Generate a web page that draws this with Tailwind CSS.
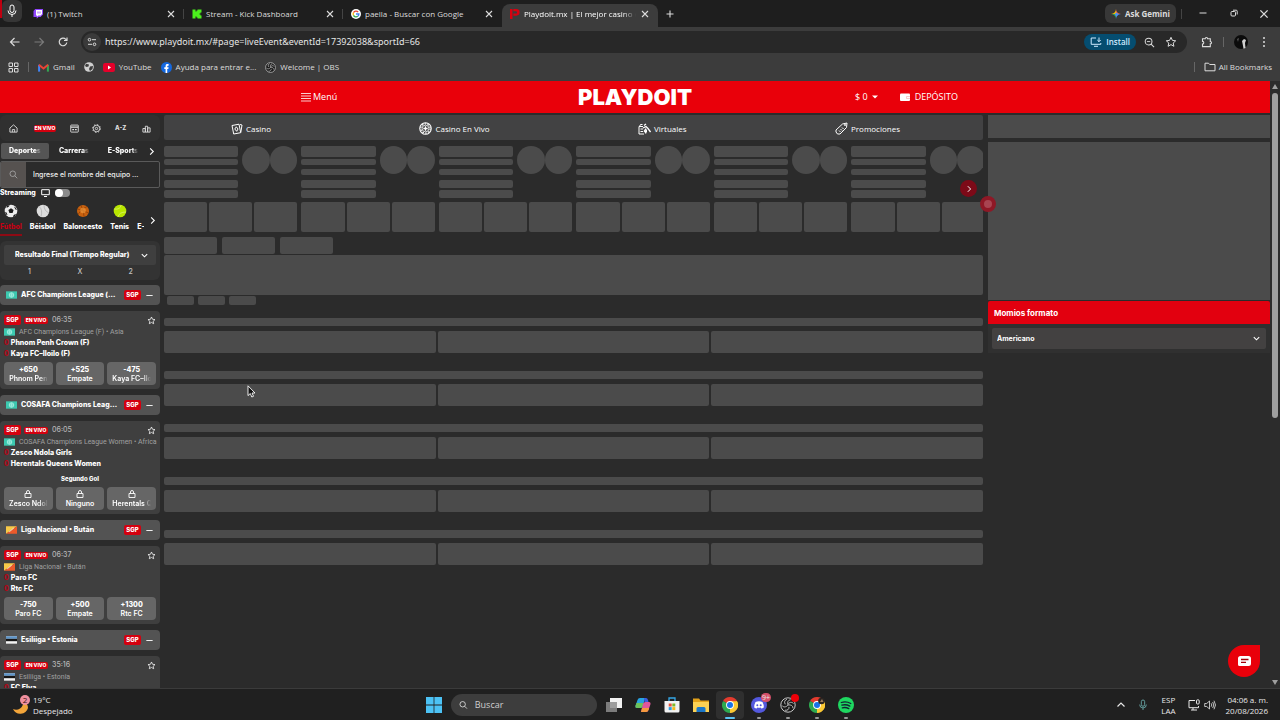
<!DOCTYPE html>
<html lang="es">
<head>
  <title>Playdoit.mx | El mejor casino de México</title>
  <meta charset="utf-8" />
  <meta name="viewport" content="width=device-width, initial-scale=1" />
  <script src="https://cdn.jsdelivr.net/npm/@tailwindcss/browser@4"></script>
</head>
<body class="h-screen overflow-hidden flex flex-col bg-[#2b2b2b] text-white font-['Open_Sans','Noto_Sans',sans-serif] text-[8px] leading-3">

<!-- shared icons -->
<svg class="hidden">
  <symbol id="close" viewBox="0 0 10 10"><path d="M2 2l6 6M8 2l-6 6" fill="none" stroke="currentColor" stroke-width="1.1" /></symbol>
  <symbol id="right" viewBox="0 0 10 10"><path d="M3.5 1.500L7 5 3.500 8.500" fill="none" stroke="currentColor" stroke-width="1.200" /></symbol>
  <symbol id="down" viewBox="0 0 10 10"><path d="M2 3.500l3 3 3-3" fill="none" stroke="currentColor" stroke-width="1.200" /></symbol>
  <symbol id="star" viewBox="0 0 12 12"><path d="M6 1.300l1.400 3.100 3.300.4-2.500 2.200.7 3.300L6 8.600l-2.900 1.700.7-3.300L1.300 4.800l3.300-.4z" fill="none" stroke="currentColor" stroke-linejoin="round" /></symbol>
  <symbol id="lens" viewBox="0 0 12 12"><circle cx="5" cy="5" r="3.700" fill="none" stroke="currentColor" stroke-width="1.100" /><path d="M7.700 7.700l3.300 3.300" stroke="currentColor" stroke-width="1.100" /></symbol>
  <symbol id="lock" viewBox="0 0 10 10"><path d="M2 4.500h6v4H2zM3.500 4.500V3a1.500 1.500 0 0 1 3 0v1.500" fill="none" stroke="currentColor" stroke-width=".9" stroke-linejoin="round" /></symbol>
  <symbol id="chrome" viewBox="0 0 16 16">
    <path d="M8 8L1.070 4A8 8 0 0 1 14.930 4z" fill="#e33b2e" />
    <path d="M8 8l6.930-4A8 8 0 0 1 8 16z" fill="#fcc934" />
    <path d="M8 8v8A8 8 0 0 1 1.070 4z" fill="#2da94f" />
    <path d="M8 4.200h7a8 8 0 0 1-.2 8L8 16l3.300-6z" fill="#fcc934" />
    <circle cx="8" cy="8" r="3.900" fill="#fff" /><circle cx="8" cy="8" r="3" fill="#1a73e8" />
  </symbol>
  <symbol id="obs" viewBox="0 0 16 16">
    <circle cx="8" cy="8" r="7.200" fill="#1a1a1a" stroke="#c9c9c9" stroke-width="1" />
    <path d="M8 8c-1-3 .3-5 2.600-5.300M8 8c3-.6 4.900.8 5 3.200M8 8c-2 2.500-4.500 2.400-6 .6M7 2.300C4.500 3 4 5.500 5.300 7.300M13.500 6.500c-1.900-1.900-4.200-1.400-5.200.600M5 13.200c2.600.6 4.300-1.200 4-3.300" fill="none" stroke="#c9c9c9" stroke-width=".9" />
  </symbol>
  <symbol id="mic" viewBox="0 0 12 14"><rect x="4" y="1" width="4" height="7.500" rx="2" fill="none" stroke="currentColor" /><path d="M2 6.500a4 4 0 0 0 8 0M6 10.500V13" fill="none" stroke="currentColor" /></symbol>
  <symbol id="world" viewBox="0 0 12 8"><rect width="12" height="8" fill="#3cc9b0" /><circle cx="6" cy="4" r="2.500" fill="#5fd8c4" stroke="#d9fff6" stroke-width=".6" /><path d="M6 1.500v5M3.500 4h5" stroke="#d9fff6" stroke-width=".4" /></symbol>
  <symbol id="bhutan" viewBox="0 0 12 8"><path d="M0 0h12L0 8z" fill="#f7c948" /><path d="M12 0v8H0z" fill="#ec5a2b" /><path d="M3.500 6l5-4" stroke="#fff" stroke-width=".8" /></symbol>
  <symbol id="estonia" viewBox="0 0 12 8"><rect width="12" height="8" fill="#f2f2f2" /><path d="M0 0h12v2.700H0z" fill="#5b93c9" /><path d="M0 2.700h12v2.600H0z" fill="#151515" /></symbol>
</svg>

<!-- browser tabs -->
<header class="shrink-0 bg-[#3c3c3c] text-[#dcdcdc]">
  <div class="h-[27px] flex items-center bg-[#1e1e1e]">
    <div class="w-[25px] self-stretch flex">
      <span class="w-[2px] h-[18px] bg-[#c00010]"></span>
      <button aria-label="Micrófono" class="w-[20px] h-[22px] rounded-md bg-[#363636] flex items-center justify-center text-white"><svg class="w-3 h-4"><use href="#mic" /></svg></button>
    </div>
    <nav class="flex self-stretch">
      <div class="w-[159px] flex items-center gap-1 px-2">
        <svg class="size-[10px] shrink-0" viewBox="0 0 10 10"><path d="M2.200 0H10v5.500L7.500 8H5.500L3.700 9.800V8H.5V2z" fill="#9146ff" /><path d="M3 1h6v4L7.500 6.500H5.300L4 7.700V6.500H3z" fill="#fff" /><path d="M5 2.500v2M7 2.500v2" stroke="#9146ff" stroke-width=".9" /></svg>
        <a href="#twitch" class="flex-1 whitespace-nowrap">(1) Twitch</a>
        <button aria-label="Cerrar"><svg class="size-[10px]"><use href="#close" /></svg></button>
      </div>
      <span class="-ml-px w-px h-[10px] self-center bg-[#444]"></span>
      <div class="w-[159px] flex items-center gap-1 px-2">
        <svg class="size-[10px] shrink-0" viewBox="0 0 10 10"><path d="M.5.5h3v2h1v-1h1v-1h4v3h-1v1h-1v1h1v1h1v3h-4v-1h-1v-1h-1v2h-3z" fill="#4bf01c" /></svg>
        <a href="#kick" class="flex-1 whitespace-nowrap">Stream - Kick Dashboard</a>
        <button aria-label="Cerrar"><svg class="size-[10px]"><use href="#close" /></svg></button>
      </div>
      <span class="-ml-px w-px h-[10px] self-center bg-[#444]"></span>
      <div class="w-[159px] flex items-center gap-1 px-2">
        <svg class="size-[10px] shrink-0" viewBox="0 0 12 12"><circle cx="6" cy="6" r="6" fill="#fff" /><g fill="none" stroke-width="1.600"><path d="M8.600 3.700A3.500 3.500 0 0 0 3 4.300" stroke="#ea4335" /><path d="M3 4.300a3.500 3.500 0 0 0 0 3.400" stroke="#fbbc05" /><path d="M3 7.700a3.500 3.500 0 0 0 5.200 1" stroke="#34a853" /><path d="M8.200 8.700A3.500 3.500 0 0 0 9.500 6H6" stroke="#4285f4" /></g></svg>
        <a href="#google" class="flex-1 whitespace-nowrap">paella - Buscar con Google</a>
        <button aria-label="Cerrar"><svg class="size-[10px]"><use href="#close" /></svg></button>
      </div>
      <div class="w-[156px] mt-1 pb-1 flex items-center gap-1 px-2 rounded-t-lg bg-[#3c3c3c]">
        <svg class="size-[10px] shrink-0" viewBox="0 0 12 12"><path d="M0 0h3v12H0zM4 0h3.500a4 4 0 0 1 0 8H4V5.500h3a1.400 1.400 0 0 0 0-2.800H4z" fill="#d8000f" /></svg>
        <a href="#playdoit" class="w-28 whitespace-nowrap text-white [mask-image:linear-gradient(to_right,black_88%,transparent)]">Playdoit.mx | El mejor casino de</a>
        <button aria-label="Cerrar"><svg class="size-[10px]"><use href="#close" /></svg></button>
      </div>
    </nav>
    <button aria-label="Nueva pestaña" class="ml-[6px]"><svg class="size-3" viewBox="0 0 12 12"><path d="M6 2.500v7M2.500 6h7" stroke="currentColor" stroke-width="1.100" /></svg></button>
    <div class="ml-auto flex items-center gap-[5px]">
      <button class="h-[19px] px-[6px] rounded-md bg-[#383838] flex items-center gap-1 font-bold"><svg class="size-[10px]" viewBox="0 0 10 10"><path d="M5 0Q4.700 4.700 0 5h5z" fill="#fbbc05" /><path d="M5 0q.3 4.700 5 5H5z" fill="#ea6a5a" /><path d="M0 5q4.700.3 5 5V5z" fill="#2faa5c" /><path d="M5 10q.3-4.700 5-5H5z" fill="#4b8df5" /><circle cx="5.500" cy="5.300" r="1.500" fill="#4b8df5" /></svg>Ask Gemini</button>
      <span class="w-px h-[10px] bg-[#444]"></span>
      <div class="flex pr-[2px]">
        <button aria-label="Minimizar" class="w-[31px] flex justify-center"><svg class="size-[10px]" viewBox="0 0 10 10"><path d="M1.500 5h7" stroke="currentColor" /></svg></button>
        <button aria-label="Restaurar" class="w-[31px] flex justify-center"><svg class="size-[10px]" viewBox="0 0 10 10"><rect x="2" y="3.500" width="4.500" height="4.500" rx="1" fill="none" stroke="currentColor" /><path d="M4 2.200h3.200a1 1 0 0 1 1 1V6.500" fill="none" stroke="currentColor" /></svg></button>
        <button aria-label="Cerrar ventana" class="w-[29px] flex justify-center"><svg class="size-3"><use href="#close" /></svg></button>
      </div>
    </div>
  </div>

  <!-- address bar -->
  <div class="h-[30px] flex items-center">
    <div class="w-[81px] pl-[9px] flex gap-3">
      <button aria-label="Atrás"><svg class="size-3" viewBox="0 0 12 12"><path d="M10.500 6h-9M5.500 2l-4 4 4 4" fill="none" stroke="currentColor" stroke-width="1.200" /></svg></button>
      <button aria-label="Adelante" class="text-[#7a7a7a]"><svg class="size-3" viewBox="0 0 12 12"><path d="M1.500 6h9M6.500 2l4 4-4 4" fill="none" stroke="currentColor" stroke-width="1.200" /></svg></button>
      <button aria-label="Recargar"><svg class="size-3" viewBox="0 0 12 12"><path d="M9.800 6.500A3.800 3.800 0 1 1 8.800 3.300L10 4.500M10 1.500v3H7" fill="none" stroke="currentColor" stroke-width="1.200" /></svg></button>
    </div>
    <div class="flex-1 h-[22px] rounded-full bg-[#282828] flex items-center pl-[2px] pr-[10px] gap-1">
      <button aria-label="Información del sitio" class="size-[18px] rounded-full bg-[#3a3a3a] flex items-center justify-center"><svg class="size-[10px]" viewBox="0 0 10 10" fill="none" stroke="currentColor"><circle cx="2.500" cy="2.700" r="1.300" /><path d="M5 2.700h4M1 7.300h4" /><circle cx="7.500" cy="7.300" r="1.300" /></svg></button>
      <input aria-label="Dirección" class="flex-1 bg-transparent outline-none font-['Noto_Sans',sans-serif] text-[9px] text-[#e6e6e6]" value="https://www.playdoit.mx/#page=liveEvent&amp;eventId=17392038&amp;sportId=66" />
      <button class="h-4 px-[6px] rounded-full bg-[#054d70] text-[#cfeaff] flex items-center gap-1 font-semibold"><svg class="w-3 h-[10px]" viewBox="0 0 12 10" fill="none" stroke="currentColor"><path d="M6 1H1.200v6.300h9.600V6M4 9.300h4M9 .5v4M7.300 3L9 4.700 10.700 3" /></svg>Install</button>
      <button aria-label="Zoom" class="ml-1 mr-[6px]"><svg class="size-[11px]" viewBox="0 0 12 12"><use href="#lens" /><path d="M3.200 5h3.600" stroke="currentColor" /></svg></button>
      <button aria-label="Favorito"><svg class="size-3"><use href="#star" /></svg></button>
    </div>
    <div class="flex items-center gap-[10px] pl-[14px] pr-[10px]">
      <button aria-label="Extensiones"><svg class="size-3" viewBox="0 0 12 12"><path d="M1.500 2.700h2.700a1.200 1.200 0 0 1 2.400 0h2.700v2.800a1.200 1.200 0 0 1 0 2.400v2.700H1.500V8a1.300 1.300 0 0 0 0-2.600z" fill="none" stroke="currentColor" stroke-width="1.100" /></svg></button>
      <span class="w-px h-[10px] bg-[#666]"></span>
      <button aria-label="Perfil"><svg class="size-[14px]" viewBox="0 0 14 14"><circle cx="7" cy="7" r="7" fill="#0b0b0b" /><path d="M8 6l2-2 2 1-1 3 .5 5-2 .8-.7-4z" fill="#cfcfcf" /><path d="M3 4l2-1-1 4z" fill="#555" /></svg></button>
      <button aria-label="Menú del navegador"><svg class="size-3" viewBox="0 0 12 12" fill="currentColor"><circle cx="6" cy="2" r="1" /><circle cx="6" cy="6" r="1" /><circle cx="6" cy="10" r="1" /></svg></button>
    </div>
  </div>

  <!-- bookmarks -->
  <nav class="h-6 pb-1 px-2 flex items-center gap-[9px]">
    <button aria-label="Aplicaciones"><svg class="size-[11px]" viewBox="0 0 11 11" fill="none" stroke="currentColor"><path d="M1 1h3.500v3.500H1zM6.500 1H10v3.500H6.500zM1 6.500h3.500V10H1zM6.500 6.500H10V10H6.500z" /></svg></button>
    <span class="w-px h-[10px] bg-[#666]"></span>
    <a href="#gmail" class="flex items-center gap-1"><svg class="w-[11px] h-[9px]" viewBox="0 0 12 9"><path d="M1.200 9V1.500" stroke="#4285f4" stroke-width="2.200" /><path d="M10.800 9V1.500" stroke="#34a853" stroke-width="2.200" /><path d="M1 1.500l5 4 5-4" fill="none" stroke="#ea4335" stroke-width="2.200" /></svg>Gmail</a>
    <a href="#web" aria-label="Web"><svg class="size-[10px]" viewBox="0 0 10 10"><circle cx="5" cy="5" r="4.800" fill="#d0d0d0" /><path d="M2 1.800l3 .7-.5 2-2 .5L1 4zM6 4.500l3-.5-.5 3L6 9l-1-2z" fill="#3c3c3c" /></svg></a>
    <a href="#youtube" class="flex items-center gap-1"><svg class="w-3 h-[9px]" viewBox="0 0 12 9"><rect width="12" height="9" rx="2.200" fill="#e6002a" /><path d="M5 2.500v4l3-2z" fill="#fff" /></svg>YouTube</a>
    <a href="#facebook" class="flex items-center gap-1"><svg class="size-[11px]" viewBox="0 0 12 12"><circle cx="6" cy="6" r="6" fill="#1468e0" /><path d="M5 12V7.500H3.600V5.700H5V4.500C5 3 5.900 2.300 7.100 2.300h1.200V4h-.7c-.6 0-.8.3-.8.800v.9h1.500l-.3 1.800H6.800V12z" fill="#fff" /></svg>Ayuda para entrar e...</a>
    <a href="#obs-welcome" class="flex items-center gap-1"><svg class="size-[11px]"><use href="#obs" /></svg>Welcome | OBS</a>
    <span class="w-px h-[10px] bg-[#666] ml-auto"></span>
    <button class="flex items-center gap-[3px]"><svg class="w-3 h-[10px]" viewBox="0 0 12 10"><path d="M1 1.200h3.500l1.200 1.300H11v6.300H1z" fill="none" stroke="currentColor" /></svg>All Bookmarks</button>
  </nav>
</header>

<!-- page -->
<div class="flex-1 min-h-0 flex">
  <div class="flex-1 min-w-0 flex flex-col">
    <div class="h-8 shrink-0 bg-[#e9000a]">
      <div class="h-full max-w-[668px] mx-auto grid grid-cols-[1fr_auto_1fr] items-center">
        <button class="justify-self-start flex items-center gap-[2px] text-[9px]"><svg class="size-[10px]" viewBox="0 0 10 10"><path d="M0 1.500h10M0 4h10M0 6.500h10M0 9h10" stroke="currentColor" stroke-width=".8" /></svg>Menú</button>
        <a href="#inicio" class="font-['Inter',sans-serif] font-black text-[22px] leading-6">PLAYDOIT</a>
        <div class="justify-self-end flex items-center gap-[22px] pr-[11px] text-[9px]">
          <button class="flex items-center gap-1">$ 0 <svg class="w-[6px] h-1" viewBox="0 0 6 4"><path d="M0 .5h6l-3 3z" fill="currentColor" /></svg></button>
          <a href="#deposito" class="flex items-center gap-[5px]"><svg class="w-[10px] h-2" viewBox="0 0 10 8"><rect y=".5" width="10" height="7.500" rx="1" fill="#fff" /><path d="M6.500 3.500H10M6.500 3.500v2H10" stroke="#f5a5a8" stroke-width=".6" fill="none" /></svg>DEPÓSITO</a>
        </div>
      </div>
    </div>

    <div class="relative flex-1 min-h-0 overflow-hidden flex gap-1 pt-[2px]">
      <!-- sidebar -->
      <aside class="w-40 shrink-0 overflow-hidden font-['Inter',sans-serif] font-extrabold text-[7px] leading-[10px]">
        <nav class="h-[26px] px-[6px] flex items-center justify-between rounded-md bg-[#303030] text-[#dedede]">
          <a href="#home" aria-label="Inicio" class="w-[14px] flex justify-center"><svg class="size-[9px]" viewBox="0 0 10 10" fill="none" stroke="currentColor"><path d="M1 4.500L5 1l4 3.500V9H1zM3.700 9V6.200h2.600V9" /></svg></a>
          <a href="#envivo" class="px-px rounded-xs bg-[#d4000f] text-white text-[5px] leading-[7px]">EN VIVO</a>
          <a href="#calendario" aria-label="Calendario"><svg class="size-[9px]" viewBox="0 0 10 10" fill="none" stroke="currentColor"><rect x=".8" y="1.200" width="8.400" height="7.800" rx=".5" /><path d="M1 3.500h8M2.500 6.200h2M5.500 6.200h2" stroke-width="1.300" /></svg></a>
          <a href="#ajustes" aria-label="Ajustes"><svg class="size-[9px]" viewBox="0 0 10 10" fill="none" stroke="currentColor"><circle cx="5" cy="5" r="3.600" /><circle cx="5" cy="5" r="1.300" /><circle cx="5" cy="5" r="4.400" stroke-dasharray="1.500 1.950" /></svg></a>
          <a href="#az" class="text-[6px]">A-Z</a>
          <a href="#podio" aria-label="Resultados" class="w-[14px] flex justify-center"><svg class="size-[9px]" viewBox="0 0 10 10" fill="none" stroke="currentColor"><path d="M1 9V5h2.700v4zM3.700 9V2.500h2.600V9zM6.300 9V4.300H9V9z" /></svg></a>
        </nav>
        <div class="mt-[2px] h-4 flex items-center pl-px pr-1">
          <button class="w-12 h-4 rounded-xs bg-[#555]"><span class="[mask-image:linear-gradient(to_right,black_80%,transparent)]">Deportes</span></button>
          <button class="w-[50px] h-4"><span class="[mask-image:linear-gradient(to_right,black_80%,transparent)]">Carreras</span></button>
          <button class="w-12 h-4 whitespace-nowrap"><span class="[mask-image:linear-gradient(to_right,black_80%,transparent)]">E-Sports</span></button>
          <button aria-label="Más categorías" class="ml-auto"><svg class="size-[9px]"><use href="#right" /></svg></button>
        </div>
        <label class="mt-[2px] h-[27px] flex items-center rounded-xs border border-[#5a5a5a] overflow-hidden">
          <span class="w-[25px] self-stretch bg-[#565250] flex items-center justify-center text-[#aaa]"><svg class="size-[9px]"><use href="#lens" /></svg></span>
          <input type="text" aria-label="Buscar equipo" placeholder="Ingrese el nombre del equipo …" class="flex-1 min-w-0 pl-[7px] bg-transparent outline-none font-medium placeholder:text-[#f0f0f0]" />
        </label>
        <label class="h-[10px] flex items-center gap-[5px]">Streaming
          <svg class="w-[9px] h-2" viewBox="0 0 9 8" fill="none" stroke="currentColor"><path d="M.7.700h7.600v5H.7zM3 7.500h3" /></svg>
          <input type="checkbox" class="peer sr-only" />
          <span class="w-[15px] h-2 rounded-full bg-[#8a8a8a] flex items-center"><span class="size-2 rounded-full bg-white"></span></span>
        </label>
        <div class="mt-[6px] h-8 flex items-center">
          <nav class="flex-1 self-stretch overflow-hidden flex gap-2 whitespace-nowrap">
            <a href="#futbol" class="flex flex-col items-center gap-1 text-[#c40012] border-b-2 border-[#8e0a14]"><svg class="size-[14px] shrink-0" viewBox="0 0 14 14"><circle cx="7" cy="7" r="6.300" fill="#ededed" /><path d="M7 4.300L9.600 6l-1 3H5.400l-1-3zM3 2l2.500-1L5 2.500 2.500 4zM11.500 3.500L13 6l-1.500-.5L10 2.500zM1 8l1.500.5L3.500 11 2 10.500zM9 12l1.500-1.500 1.500-.5-1 2-2 1z" fill="#1b1b1b" /></svg>Fútbol</a>
            <a href="#beisbol" class="flex flex-col items-center gap-1"><svg class="size-[14px] shrink-0" viewBox="0 0 14 14"><circle cx="7" cy="7" r="6.300" fill="#dcdcdc" /><path d="M3 2.500q4 3 2 10M8 1q0 6 5 8" fill="none" stroke="#a9a9a9" stroke-width=".7" /></svg>Béisbol</a>
            <a href="#baloncesto" class="flex flex-col items-center gap-1"><svg class="size-[14px] shrink-0" viewBox="0 0 14 14"><circle cx="7" cy="7" r="6" fill="#c8610f" /><path d="M1.500 5q5 1 11 4M5 1.500q3 5 3 11M11 2.500q-6 2-9 8" fill="none" stroke="#7a3204" stroke-width=".6" /><circle cx="7" cy="6.500" r="2.800" fill="#f0993c" opacity=".7" /></svg>Baloncesto</a>
            <a href="#tenis" class="flex flex-col items-center gap-1"><svg class="size-[14px] shrink-0" viewBox="0 0 14 14"><circle cx="7" cy="7" r="6.300" fill="#b9e600" /><path d="M1.200 5q6 1 7-4M5 13q1-5 8-5" fill="none" stroke="#dcf57a" stroke-width=".7" /></svg>Tenis</a>
            <a href="#esports" class="flex flex-col items-start gap-1"><span class="size-[14px] shrink-0"></span>E-s</a>
          </nav>
          <button aria-label="Más deportes" class="w-4 flex justify-center"><svg class="size-[9px]"><use href="#right" /></svg></button>
        </div>
        <div class="mt-[5px] p-1 pb-[3px] rounded-md bg-[#333]">
          <label class="h-5 flex items-center rounded-xs bg-[#3f3f3f] pl-[11px] pr-[7px]">
            <select aria-label="Mercado" class="flex-1 min-w-0 appearance-none bg-transparent outline-none"><option>Resultado Final (Tiempo Regular)</option></select>
            <svg class="size-[9px]"><use href="#down" /></svg>
          </label>
          <div class="mt-[2px] grid grid-cols-3 text-center font-medium text-[#c4c4c4]"><span>1</span><span>X</span><span>2</span></div>
        </div>
        <div id="leagues" class="mt-[5px] flex flex-col gap-[6px]"></div>
      </aside>

      <!-- center -->
      <main class="flex-1 min-w-0">
        <nav class="h-[25px] pt-[2px] pl-[67px] pr-[83px] flex items-center justify-between rounded-xs bg-[#424243]">
          <a href="#casino" class="flex items-center gap-[3px]"><svg class="size-3" viewBox="0 0 12 12" fill="none" stroke="currentColor"><path d="M1 2.500l7-1.300 1.700 8.500-7 1.300zM9 1.500l2 .5-1.200 7.500" /><path d="M5.300 3.800l1.700 2.200-1.300 2.300L3.800 6z" /></svg>Casino</a>
          <a href="#casino-en-vivo" class="flex items-center gap-[3px]"><svg class="size-[13px]" viewBox="0 0 12 12" fill="none" stroke="currentColor"><circle cx="6" cy="6" r="5.300" /><circle cx="6" cy="6" r="4.300" stroke-dasharray="1.500 1.200" /><circle cx="6" cy="6" r="3.100" stroke-width=".7" /><path d="M6 4v4M4 6h4" stroke-width="1.200" /></svg>Casino En Vivo</a>
          <a href="#virtuales" class="flex items-center gap-[3px]"><svg class="w-[13px] h-3" viewBox="0 0 13 12" fill="none" stroke="currentColor"><path d="M6 11H1V3.500h4M1.500 3.500l1-2h2M2.500 6H5M2.500 8.500H5" /><path d="M6 2.500L8 1M5 5l3-1.500 2 2 2.500 3.500M8 5.500l-2 3M8.500 6.500l-1 4M6 8.500h3" stroke-width="1.300" /></svg>Virtuales</a>
          <a href="#promociones" class="flex items-center gap-[3px]"><svg class="size-[13px]" viewBox="0 0 13 13" fill="none" stroke="currentColor"><path d="M1 8L7.500 2l4.500-1-.5 4.500L5 12H2.500L1 10zM4 8.500l1.500 1.500M5.500 7l1.500 1.500M7 5.500L8.500 7" /><circle cx="10" cy="3" r=".6" /></svg>Promociones</a>
        </nav>
        <div id="highlights" class="mt-[6px] flex gap-1 overflow-hidden"></div>
        <div class="mt-[5px] flex gap-[5px]">
          <span class="w-[53px] h-[17px] rounded-xs bg-[#4b4b4b]"></span>
          <span class="w-[53px] h-[17px] rounded-xs bg-[#4b4b4b]"></span>
          <span class="w-[53px] h-[17px] rounded-xs bg-[#4b4b4b]"></span>
        </div>
        <div class="mt-px h-10 rounded-xs bg-[#4b4b4b]"></div>
        <div class="mt-px pl-[3px] flex gap-1">
          <span class="w-[27px] h-[9px] rounded-xs bg-[#4b4b4b]"></span>
          <span class="w-[27px] h-[9px] rounded-xs bg-[#4b4b4b]"></span>
          <span class="w-[27px] h-[9px] rounded-xs bg-[#4b4b4b]"></span>
        </div>
        <div id="markets" class="mt-[13px] flex flex-col gap-[18px]"></div>
      </main>

      <!-- bet slip -->
      <aside class="w-[282px] ml-px shrink-0 font-['Inter',sans-serif] font-bold">
        <div class="h-[23px] bg-[#4b4b4b]"></div>
        <div class="mt-1 h-[158px] bg-[#4b4b4b]"></div>
        <h2 class="mt-px h-[23px] px-[6px] flex items-center rounded-t-xs bg-[#e2000f]">Momios formato</h2>
        <div class="p-1 bg-[#303030]">
          <label class="h-[21px] px-[5px] flex items-center rounded-xs bg-[#434141] text-[7px]">
            <select aria-label="Momios formato" class="flex-1 appearance-none bg-transparent outline-none"><option>Americano</option><option>Decimal</option></select>
            <svg class="size-[9px]"><use href="#down" /></svg>
          </label>
        </div>
      </aside>

      <!-- floating controls -->
      <button aria-label="Siguiente" class="absolute top-[67px] right-[293px] size-[17px] rounded-full bg-[#7d0a18] flex items-center justify-center"><svg class="size-2"><use href="#right" /></svg></button>
      <span class="absolute top-[83px] right-[274px] size-4 rounded-full border-4 border-[#8f1826] bg-[#a84451]"></span>
      <button aria-label="Chat" class="absolute bottom-[11px] right-[10px] size-8 rounded-full rounded-tr-sm bg-[#e9000a] flex items-center justify-center"><svg class="w-[13px] h-[11px]" viewBox="0 0 13 11"><path d="M2.500 0h8A2.500 2.500 0 0 1 13 2.500V7.500A2.500 2.500 0 0 1 10.500 10H1.500A1.500 1.500 0 0 1 0 8.500v-6A2.500 2.500 0 0 1 2.500 0z" fill="#fff" /><path d="M3 3.500h7.500M3 6.300h5" stroke="#a3000a" stroke-width="1.300" /></svg></button>
      <svg class="absolute top-[272px] left-[247px] w-[9px] h-[13px]" viewBox="0 0 9 13"><path d="M1 .8v9.800l2.300-2.100 1.500 3.500 1.700-.7L5 8h3z" fill="#111" stroke="#fff" stroke-width=".9" /></svg>
    </div>
  </div>

  <!-- scrollbar -->
  <div class="w-[10px] shrink-0 bg-[#2c2c2c] py-[3px] flex flex-col items-center gap-1 text-[#9f9f9f]">
    <svg class="w-[6px] h-[5px]" viewBox="0 0 6 5"><path d="M3 0l3 5H0z" fill="currentColor" /></svg>
    <span class="w-[6px] h-[54%] rounded-full bg-[#9f9f9f]"></span>
    <svg class="w-[6px] h-[5px] mt-auto" viewBox="0 0 6 5"><path d="M3 5l3-5H0z" fill="currentColor" /></svg>
  </div>
</div>

<!-- taskbar -->
<footer class="h-8 shrink-0 flex items-center bg-[#202020] border-t border-[#3b3b3b] text-[#e8e8e8] leading-[11px]">
  <div class="flex-1 pl-3 flex items-center">
    <button class="flex items-center gap-[3px] text-left">
      <svg class="w-[18px] h-5" viewBox="0 0 18 20"><path d="M11 7a7 7 0 0 1-10 7 8 8 0 0 0 15-1 6 6 0 0 0-5-6z" fill="#f2a53a" /><circle cx="13" cy="5" r="5" fill="#f0909f" /><text x="13" y="8" text-anchor="middle" font-size="8" fill="#3a1015">2</text></svg>
      <span class="flex flex-col"><span>19°C</span><span>Despejado</span></span>
    </button>
  </div>
  <div class="flex items-center gap-[3px]">
    <button aria-label="Inicio" class="w-7 flex justify-center"><svg class="size-4" viewBox="0 0 16 16" fill="#4cc2f5"><path d="M0 0h7.600v7.600H0zM8.400 0H16v7.600H8.400zM0 8.400h7.600V16H0zM8.400 8.400H16V16H8.400z" /></svg></button>
    <label class="w-[146px] h-[22px] px-2 flex items-center gap-[7px] rounded-full bg-[#3d3d3d]"><svg class="size-[10px]"><use href="#lens" /></svg><input type="search" aria-label="Buscar" placeholder="Buscar" class="w-full bg-transparent outline-none text-[9px] placeholder:text-[#cfcfcf]" /></label>
    <div class="flex gap-px">
      <button aria-label="Vista de tareas" class="w-7 h-7 flex items-center justify-center"><svg class="size-4" viewBox="0 0 16 16"><rect x="4" y="1" width="12" height="10" fill="#f1f1f1" /><rect x="0" y="5" width="11" height="10" fill="#8d8d8d" opacity=".85" /></svg></button>
      <button aria-label="Copilot" class="w-7 h-7 flex items-center justify-center"><svg class="size-4" viewBox="0 0 16 16"><path d="M5 1h5L8 9q-.5 2-2.500 2H2Q0 11 .6 8.500L2.500 3Q3 1 5 1z" fill="#27a3e0" /><path d="M.6 8.500L1.500 6h7L8 9q-.5 2-2.500 2H2Q0 11 .6 8.500z" fill="#6cc25a" /><path d="M11 15H6l2-8q.5-2 2.500-2H14q2 0 1.400 2.500L13.500 13q-.5 2-2.500 2z" fill="#e0569c" /><path d="M11 15H6l1-4h7.200l-.7 2q-.5 2-2.500 2z" fill="#f59a3e" /><path d="M9 1h2q1.500 0 2 2l.5 2H9.500z" fill="#3b5ce0" /></svg></button>
      <button aria-label="Store" class="w-7 h-7 flex items-center justify-center"><svg class="size-4" viewBox="0 0 16 16"><path d="M5 4V1h6v3" fill="none" stroke="#35a7e6" stroke-width="1.300" /><path d="M.5 4h15v10a1.500 1.500 0 0 1-1.500 1.500H2A1.500 1.500 0 0 1 .5 14z" fill="#f2f2f2" /><path d="M4.700 6.500h3v3h-3z" fill="#e8503a" /><path d="M8.300 6.500h3v3h-3z" fill="#7db928" /><path d="M4.700 10.100h3v3h-3z" fill="#2b9fe3" /><path d="M8.300 10.100h3v3h-3z" fill="#f5b81c" /></svg></button>
      <button aria-label="Explorador" class="w-7 h-7 flex items-center justify-center"><svg class="size-4" viewBox="0 0 16 16"><path d="M0 1.500h6l1.500 2H16v4H0z" fill="#e3a21a" /><path d="M0 5h16v10H0z" fill="#fbd154" /><path d="M3.500 15v-3.500a1.500 1.500 0 0 1 1.500-1.500h6a1.500 1.500 0 0 1 1.500 1.500V15z" fill="#1b77c9" /></svg></button>
      <button aria-label="Chrome" class="relative w-7 h-7 rounded-sm bg-[#2f2f2f] flex items-center justify-center"><svg class="size-4"><use href="#chrome" /></svg><span class="absolute bottom-0 w-[10px] h-[2px] rounded-full bg-[#5cc4f5]"></span></button>
      <button aria-label="Discord" class="relative w-7 h-7 flex items-center justify-center"><svg class="size-4" viewBox="0 0 16 16"><circle cx="8" cy="8" r="8" fill="#5358dd" /><path d="M4.500 5q3.500-1.500 7 0 1.500 3 1.300 5.500-1.300 1-2.500 1l-.6-1q-1.700.5-3.400 0l-.6 1q-1.200 0-2.500-1Q3 8 4.500 5z" fill="#fff" /><circle cx="6.300" cy="8.300" r="1" fill="#5358dd" /><circle cx="9.700" cy="8.300" r="1" fill="#5358dd" /></svg><span class="absolute top-[2px] right-[2px] w-[10px] rounded-full bg-[#d5506a] text-[7px] leading-[9px]">9+</span><span class="absolute bottom-0 w-1 h-[2px] rounded-full bg-[#9a9a9a]"></span></button>
      <button aria-label="OBS" class="relative w-7 h-7 flex items-center justify-center"><svg class="size-4"><use href="#obs" /></svg><span class="absolute top-[3px] right-[3px] size-2 rounded-full bg-[#ee0008]"></span><span class="absolute bottom-0 w-1 h-[2px] rounded-full bg-[#9a9a9a]"></span></button>
      <button aria-label="Chrome perfil" class="relative w-7 h-7 flex items-center justify-center"><svg class="size-4" viewBox="0 0 16 16"><use href="#chrome" /><circle cx="12.500" cy="4" r="3.300" fill="#2b2420" /><path d="M11 5l2-3 1.500 3z" fill="#9a7a5c" /></svg><span class="absolute bottom-0 w-1 h-[2px] rounded-full bg-[#9a9a9a]"></span></button>
      <button aria-label="Spotify" class="relative w-7 h-7 flex items-center justify-center"><svg class="size-4" viewBox="0 0 16 16"><circle cx="8" cy="8" r="8" fill="#1ed760" /><path d="M3.300 5.500q5-1.500 9.500 1M3.800 8.200q4.300-1.200 8 .9M4.300 10.800q3.500-.9 6.500.8" fill="none" stroke="#123" stroke-width="1.300" stroke-linecap="round" /></svg><span class="absolute bottom-0 w-1 h-[2px] rounded-full bg-[#9a9a9a]"></span></button>
    </div>
  </div>
  <div class="flex-1 pr-3 flex items-center justify-end">
    <button aria-label="Iconos ocultos"><svg class="size-[10px]" viewBox="0 0 10 10"><path d="M1.500 6.500L5 3l3.500 3.500" fill="none" stroke="currentColor" stroke-width="1.200" /></svg></button>
    <button aria-label="Micrófono en uso" class="ml-3 text-[#6fb3b3]"><svg class="w-[10px] h-3"><use href="#mic" /></svg></button>
    <button class="ml-[13px] flex flex-col items-center"><span>ESP</span><span>LAA</span></button>
    <button aria-label="Red y volumen" class="ml-3 flex gap-1"><svg class="size-3" viewBox="0 0 12 12" fill="none" stroke="currentColor"><path d="M7 1.500H1v7.200h9.500V7M3 11h6M5 9v2" /><rect x="8.500" y=".800" width="2.700" height="4.200" rx="1" /></svg><svg class="size-3" viewBox="0 0 12 12" fill="none" stroke="currentColor"><path d="M.7 4.500h2L5.500 2v8L2.700 7.500h-2zM7.200 4.300q1.200 1.700 0 3.400M8.700 3q2.200 3 0 6M10 1.700q3 4.300 0 8.600" stroke-width=".8" /></svg></button>
    <button class="ml-[10px] flex flex-col items-end"><span>04:06 a. m.</span><span>20/08/2026</span></button>
  </div>
</footer>

<script>
  const leagues = [
    { name: "AFC Champions League (…", full: "AFC Champions League (F) • Asia", flag: "world", time: "06:35",
      teams: ["Phnom Penh Crown (F)", "Kaya FC–Iloilo (F)"],
      odds: [["+650", "Phnom Pen"], ["+525", "Empate"], ["-475", "Kaya FC–Ilo"]] },
    { name: "COSAFA Champions Leag…", full: "COSAFA Champions League Women • Africa", flag: "world", time: "06:05",
      teams: ["Zesco Ndola Girls", "Herentals Queens Women"], market: "Segundo Gol",
      odds: [["", "Zesco Ndol"], ["", "Ninguno"], ["", "Herentals Q"]] },
    { name: "Liga Nacional • Bután", full: "Liga Nacional • Bután", flag: "bhutan", time: "06:37",
      teams: ["Paro FC", "Rtc FC"],
      odds: [["-750", "Paro FC"], ["+500", "Empate"], ["+1300", "Rtc FC"]] },
    { name: "Esiliiga • Estonia", full: "Esiliiga • Estonia", flag: "estonia", time: "35:16",
      teams: ["FC Elva", "Tallinna Kalev"],
      odds: [["-120", "FC Elva"], ["+260", "Empate"], ["+250", "Kalev"]] }
  ];

  const sgp = `<span class="w-[17px] text-center rounded-xs bg-[#d4000f] text-[6px]">SGP</span>`;

  function oddsButton([price, label]) {
    const top = price || `<svg class="size-[10px] mx-auto"><use href="#lock" /></svg>`;
    const fade = label.length > 8 ? "[mask-image:linear-gradient(to_right,black_78%,transparent)]" : "";
    return `<button class="h-[23px] px-[5px] rounded-sm bg-[#666] overflow-hidden leading-[9px]">
      <span class="block">${top}</span>
      <span class="block whitespace-nowrap overflow-hidden font-semibold ${fade}">${label}</span>
    </button>`;
  }

  document.getElementById("leagues").innerHTML = leagues.map(l => `
    <h3 class="h-5 px-[6px] flex items-center rounded-sm bg-[#535353]">
      <svg class="w-[11px] h-2 shrink-0"><use href="#${l.flag}" /></svg>
      <span class="flex-1 min-w-0 ml-1 whitespace-nowrap">${l.name}</span>
      ${sgp}
      <button aria-label="Contraer" class="ml-1"><svg class="size-[9px]" viewBox="0 0 10 10"><path d="M1.500 5h7" stroke="currentColor" /></svg></button>
    </h3>
    <section class="px-1 py-1 rounded-sm bg-[#3f3f3f]">
      <div class="flex items-center gap-[3px]">
        ${sgp}
        <span class="w-6 text-center rounded-xs bg-[#d4000f] text-[5px] leading-[7px]">EN VIVO</span>
        <span class="ml-px font-medium text-[#b5b5b5]">${l.time}</span>
        <button aria-label="Favorito" class="ml-auto"><svg class="size-[9px]"><use href="#star" /></svg></button>
      </div>
      <div class="mt-[2px] flex items-center gap-1 font-['Roboto',sans-serif] font-normal text-[#a0a0a0]">
        <svg class="w-[11px] h-2 shrink-0"><use href="#${l.flag}" /></svg><span class="whitespace-nowrap">${l.full}</span>
      </div>
      ${l.teams.map(t => `<div class="flex gap-[2px] mt-px whitespace-nowrap"><span class="text-[#b00818]">0</span>${t}</div>`).join("")}
      ${l.market ? `<div class="mt-[5px] text-center text-[6px]">${l.market}</div>` : ""}
      <div class="mt-[3px] grid grid-cols-3 gap-[3px]">${l.odds.map(oddsButton).join("")}</div>
    </section>`).join("");

  const card = `
    <div class="w-[16.3%] shrink-0">
      <div class="flex gap-1">
        <div class="w-[55.5%] flex flex-col">
          <span class="h-[11px] rounded-xs bg-[#4b4b4b]"></span>
          <span class="mt-[2px] h-[6px] rounded-xs bg-[#4b4b4b]"></span>
          <span class="mt-1 h-[6px] rounded-xs bg-[#4b4b4b]"></span>
          <span class="mt-[5px] h-2 rounded-xs bg-[#4b4b4b]"></span>
          <span class="mt-[2px] h-2 rounded-xs bg-[#4b4b4b]"></span>
        </div>
        <div class="flex-1 grid grid-cols-2 items-start">
          <span class="aspect-square rounded-full bg-[#4b4b4b]"></span>
          <span class="aspect-square rounded-full bg-[#4b4b4b]"></span>
        </div>
      </div>
      <div class="mt-1 grid grid-cols-3 gap-[2px]">
        <span class="h-[30px] rounded-xs bg-[#4b4b4b]"></span>
        <span class="h-[30px] rounded-xs bg-[#4b4b4b]"></span>
        <span class="h-[30px] rounded-xs bg-[#4b4b4b]"></span>
      </div>
    </div>`;
  document.getElementById("highlights").innerHTML = card.repeat(6);

  const market = `
    <div>
      <div class="h-[8px] rounded-xs bg-[#4b4b4b]"></div>
      <div class="mt-[5px] grid grid-cols-3 gap-[2px]">
        <span class="h-[22px] rounded-xs bg-[#4b4b4b]"></span>
        <span class="h-[22px] rounded-xs bg-[#4b4b4b]"></span>
        <span class="h-[22px] rounded-xs bg-[#4b4b4b]"></span>
      </div>
    </div>`;
  document.getElementById("markets").innerHTML = market.repeat(5);
</script>

</body>
</html>
